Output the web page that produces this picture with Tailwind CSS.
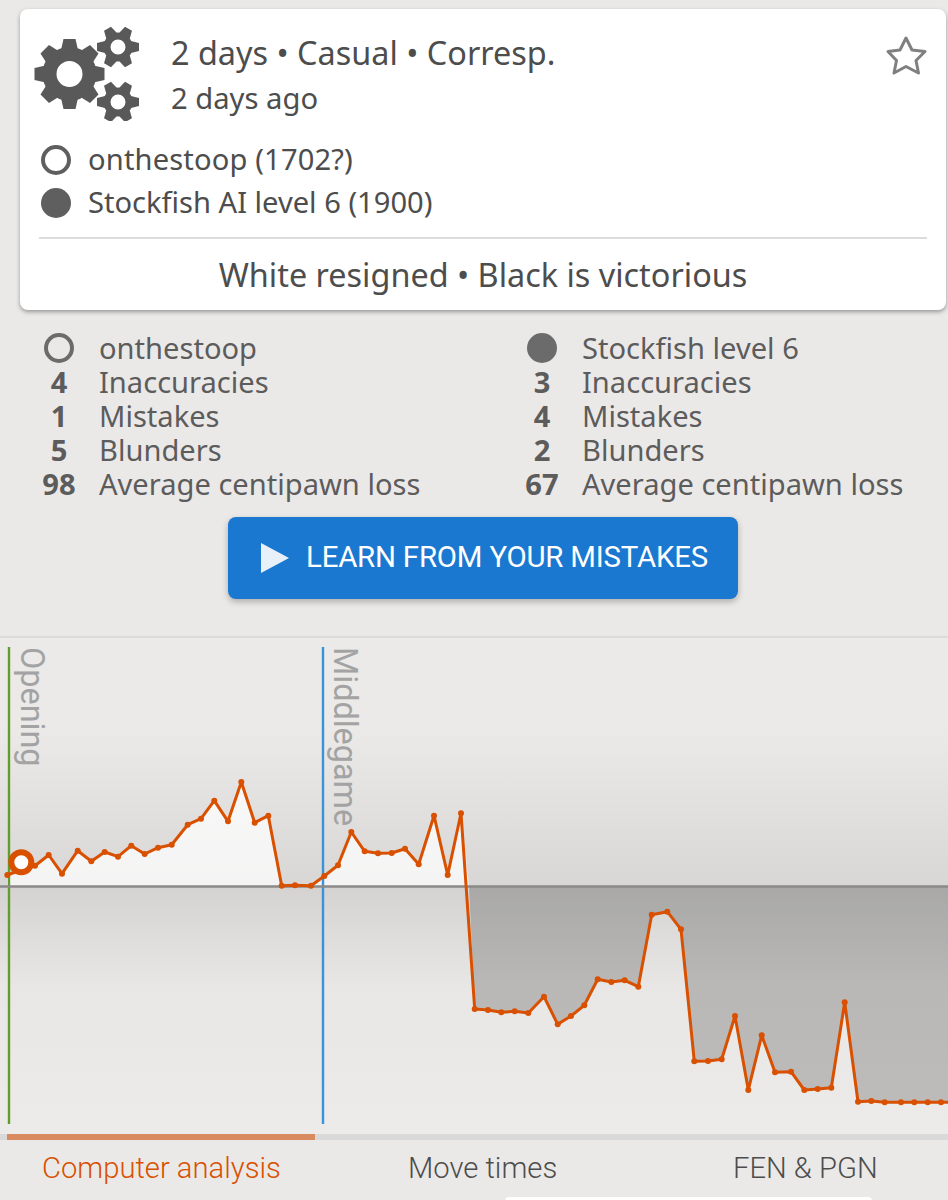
<!doctype html>
<html lang="en">
<head>
<meta charset="utf-8">
<title>Game analysis</title>
<script src="https://cdn.jsdelivr.net/npm/@tailwindcss/browser@4"></script>
</head>
<body class="m-0">
<div class="w-[948px] h-[1200px] overflow-hidden bg-[#ebe9e8] font-['Noto_Sans',sans-serif] text-[#4d4d4d]">

  <section class="relative ml-[20px] w-[926px] h-[301px] translate-y-[9px] rounded-[8px] bg-white shadow-[0_2px_4px_rgba(0,0,0,0.35)]">
    <div class="flex h-[112px] pt-[20px]">
      <svg class="ml-[13px] mt-[-4px] w-[110px] h-[96px] shrink-0" viewBox="33 25 110 96" fill="#595959" aria-hidden="true">
        <g>
          <circle cx="69.5" cy="74" r="20" fill="none" stroke="#595959" stroke-width="14"/>
          <g transform="translate(69.5 74)">
            <polygon points="-6,-35 6,-35 8.5,-24 -8.5,-24"/>
            <polygon points="-6,-35 6,-35 8.5,-24 -8.5,-24" transform="rotate(45)"/>
            <polygon points="-6,-35 6,-35 8.5,-24 -8.5,-24" transform="rotate(90)"/>
            <polygon points="-6,-35 6,-35 8.5,-24 -8.5,-24" transform="rotate(135)"/>
            <polygon points="-6,-35 6,-35 8.5,-24 -8.5,-24" transform="rotate(180)"/>
            <polygon points="-6,-35 6,-35 8.5,-24 -8.5,-24" transform="rotate(225)"/>
            <polygon points="-6,-35 6,-35 8.5,-24 -8.5,-24" transform="rotate(270)"/>
            <polygon points="-6,-35 6,-35 8.5,-24 -8.5,-24" transform="rotate(315)"/>
          </g>
        </g>
        <g transform="translate(118 47)">
          <circle r="11" fill="none" stroke="#595959" stroke-width="7"/>
          <polygon points="-4,-21 4,-21 6,-13 -6,-13" transform="rotate(30)"/>
          <polygon points="-4,-21 4,-21 6,-13 -6,-13" transform="rotate(90)"/>
          <polygon points="-4,-21 4,-21 6,-13 -6,-13" transform="rotate(150)"/>
          <polygon points="-4,-21 4,-21 6,-13 -6,-13" transform="rotate(210)"/>
          <polygon points="-4,-21 4,-21 6,-13 -6,-13" transform="rotate(270)"/>
          <polygon points="-4,-21 4,-21 6,-13 -6,-13" transform="rotate(330)"/>
        </g>
        <g transform="translate(118 102)">
          <circle r="11" fill="none" stroke="#595959" stroke-width="7"/>
          <polygon points="-4,-21 4,-21 6,-13 -6,-13" transform="rotate(30)"/>
          <polygon points="-4,-21 4,-21 6,-13 -6,-13" transform="rotate(90)"/>
          <polygon points="-4,-21 4,-21 6,-13 -6,-13" transform="rotate(150)"/>
          <polygon points="-4,-21 4,-21 6,-13 -6,-13" transform="rotate(210)"/>
          <polygon points="-4,-21 4,-21 6,-13 -6,-13" transform="rotate(270)"/>
          <polygon points="-4,-21 4,-21 6,-13 -6,-13" transform="rotate(330)"/>
        </g>
      </svg>
      <div class="ml-[28px]">
        <div class="text-[32.4px] leading-[46px]">2 days • Casual • Corresp.</div>
        <div class="text-[29.2px] leading-[44px] mt-[1px]">2 days ago</div>
      </div>
    </div>
    <svg class="absolute left-[865px] top-[26px] w-[42px] h-[42px]" viewBox="884 35 42 42" aria-hidden="true">
      <polygon points="905,38 911,50 924,51.5 915,60.5 917.5,73 905,66.5 893,73 895.5,60.5 887,51.5 899,50" fill="none" stroke="#808080" stroke-width="3" stroke-linejoin="round"/>
    </svg>

    <div class="pl-[21px] pt-[17px]">
      <div class="flex items-center h-[43px]">
        <span class="w-[30px] h-[30px] rounded-full border-[4px] border-[#5f5f5f] bg-white shrink-0"></span>
        <span class="ml-[17px] text-[29.1px] tracking-[0.15px]">onthestoop (1702?)</span>
      </div>
      <div class="flex items-center h-[43px]">
        <span class="w-[30px] h-[30px] rounded-full bg-[#5f5f5f] shrink-0"></span>
        <span class="ml-[17px] text-[29.1px]">Stockfish AI level 6 (1900)</span>
      </div>
    </div>
    <div class="mx-[19px] mt-[13px] h-[2px] bg-[#dcdcdc]"></div>
    <div class="text-center text-[32.4px] leading-[70px]">White resigned • Black is victorious</div>
  </section>

  <section class="grid grid-cols-2 pt-[30px] text-[#5c5c5c] text-[29.1px] leading-[34px]">
    <div class="pl-[39px]">
      <div class="flex items-center h-[34px]"><span class="w-[40px] flex justify-center"><span class="w-[30px] h-[30px] rounded-full border-[4px] border-[#6b6b6b]"></span></span><span class="ml-[20px]">onthestoop</span></div>
      <div class="flex items-center h-[34px]"><span class="w-[40px] text-center font-bold">4</span><span class="ml-[20px]">Inaccuracies</span></div>
      <div class="flex items-center h-[34px]"><span class="w-[40px] text-center font-bold">1</span><span class="ml-[20px]">Mistakes</span></div>
      <div class="flex items-center h-[34px]"><span class="w-[40px] text-center font-bold">5</span><span class="ml-[20px]">Blunders</span></div>
      <div class="flex items-center h-[34px]"><span class="w-[40px] text-center font-bold">98</span><span class="ml-[20px]">Average centipawn loss</span></div>
    </div>
    <div class="pl-[48px]">
      <div class="flex items-center h-[34px]"><span class="w-[40px] flex justify-center"><span class="w-[30px] h-[30px] rounded-full bg-[#6b6b6b]"></span></span><span class="ml-[20px]">Stockfish level 6</span></div>
      <div class="flex items-center h-[34px]"><span class="w-[40px] text-center font-bold">3</span><span class="ml-[20px]">Inaccuracies</span></div>
      <div class="flex items-center h-[34px]"><span class="w-[40px] text-center font-bold">4</span><span class="ml-[20px]">Mistakes</span></div>
      <div class="flex items-center h-[34px]"><span class="w-[40px] text-center font-bold">2</span><span class="ml-[20px]">Blunders</span></div>
      <div class="flex items-center h-[34px]"><span class="w-[40px] text-center font-bold">67</span><span class="ml-[20px]">Average centipawn loss</span></div>
    </div>
  </section>

  <div class="mt-[16px] ml-[228px] w-[510px] h-[82px] rounded-[8px] bg-[#1b78d0] shadow-[0_3px_6px_rgba(0,0,0,0.25)] flex items-center pl-[32px] text-white font-['Roboto',sans-serif] text-[29.4px]">
    <svg class="w-[30px] h-[32px] shrink-0" viewBox="0 0 30 32" aria-hidden="true"><polygon points="1,1 29,16 1,31" fill="#e8f1fa"/></svg>
    <span class="ml-[16px] mt-[-2px] tracking-[-0.2px]">LEARN FROM YOUR MISTAKES</span>
  </div>

  <div class="mt-[37px] h-[2px] bg-[#dcdbd9]"></div>

  <svg class="block w-[948px] h-[496px] bg-[linear-gradient(to_bottom,#ebeae9_0px,#ebeae9_90px,#d8d7d6_247px,#d4d3d2_249px,#e8e7e5_350px,#ecebe9_496px)]" viewBox="0 638 948 496" role="img" aria-label="Evaluation chart">
    <defs>
      <clipPath id="above"><rect x="0" y="638" width="948" height="248"/></clipPath>
      <clipPath id="below"><rect x="0" y="886" width="948" height="248"/></clipPath>
    </defs>
    <polygon clip-path="url(#above)" fill="#ffffff" fill-opacity="0.72" points="7,886 7.3,875 21,870 35,865.7 48.7,855 62,873.7 77.7,850.7 91.3,861.3 104.7,852 118,856.7 131.3,845.7 144.7,854 158,847.7 171.7,844.7 187.7,824.7 201,818.7 214.3,800.7 228,821.3 241.3,782 254.7,822.7 268.3,815.7 281.7,885.7 295,885.3 311,885.7 324.3,876 338,865.3 351.3,832 364.7,851.3 378,853.3 391.7,853 405,848.7 418.7,864.3 434,815.7 447.7,875 461,813.3 469,886"/>
    <polygon clip-path="url(#below)" fill="#000000" fill-opacity="0.2" points="469,886 474.7,1009 488,1010 501.3,1012.3 514.7,1011.3 528.3,1013 544,996.7 557.7,1024.3 571,1016 584.3,1005.3 597.7,979.3 611.3,982 624.7,980.3 638.3,986.7 651.7,914.7 667.3,911.7 681,929.3 694.3,1061.3 708,1061 721.7,1059.3 735,1016 748.3,1090 761.7,1035.3 775,1072.3 791,1071.7 804.3,1090 817.7,1089 831.3,1087.7 844.7,1002.3 858,1101.7 871.3,1101 884.7,1102.3 901,1102.3 914.3,1102.3 927.7,1102.3 941,1102.3 948,1102.3 948,886"/>

    <line x1="9" y1="647" x2="9" y2="1124" stroke="#5f9e2d" stroke-width="2.4"/>
    <line x1="323" y1="647" x2="323" y2="1124" stroke="#3893d8" stroke-width="2.4"/>
    <line x1="0" y1="886.5" x2="948" y2="886.5" stroke="#8b8a89" stroke-width="2.4"/>

    <text transform="translate(21 647) rotate(90)" fill="#a3a3a3" font-family="Roboto, sans-serif" font-size="32.4">Opening</text>
    <text transform="translate(334 647) rotate(90)" fill="#a3a3a3" font-family="Roboto, sans-serif" font-size="32.4">Middlegame</text>

    <polyline fill="none" stroke="#d85000" stroke-width="3" stroke-linejoin="round" points="7.3,875 21,870 35,865.7 48.7,855 62,873.7 77.7,850.7 91.3,861.3 104.7,852 118,856.7 131.3,845.7 144.7,854 158,847.7 171.7,844.7 187.7,824.7 201,818.7 214.3,800.7 228,821.3 241.3,782 254.7,822.7 268.3,815.7 281.7,885.7 295,885.3 311,885.7 324.3,876 338,865.3 351.3,832 364.7,851.3 378,853.3 391.7,853 405,848.7 418.7,864.3 434,815.7 447.7,875 461,813.3 474.7,1009 488,1010 501.3,1012.3 514.7,1011.3 528.3,1013 544,996.7 557.7,1024.3 571,1016 584.3,1005.3 597.7,979.3 611.3,982 624.7,980.3 638.3,986.7 651.7,914.7 667.3,911.7 681,929.3 694.3,1061.3 708,1061 721.7,1059.3 735,1016 748.3,1090 761.7,1035.3 775,1072.3 791,1071.7 804.3,1090 817.7,1089 831.3,1087.7 844.7,1002.3 858,1101.7 871.3,1101 884.7,1102.3 901,1102.3 914.3,1102.3 927.7,1102.3 941,1102.3 948,1102.3"/>
    <g fill="#d85000">
      <circle cx="7.3" cy="875" r="3"/><circle cx="35" cy="865.7" r="3"/><circle cx="48.7" cy="855" r="3"/><circle cx="62" cy="873.7" r="3"/><circle cx="77.7" cy="850.7" r="3"/><circle cx="91.3" cy="861.3" r="3"/><circle cx="104.7" cy="852" r="3"/><circle cx="118" cy="856.7" r="3"/><circle cx="131.3" cy="845.7" r="3"/><circle cx="144.7" cy="854" r="3"/><circle cx="158" cy="847.7" r="3"/><circle cx="171.7" cy="844.7" r="3"/><circle cx="187.7" cy="824.7" r="3"/><circle cx="201" cy="818.7" r="3"/><circle cx="214.3" cy="800.7" r="3"/><circle cx="228" cy="821.3" r="3"/><circle cx="241.3" cy="782" r="3"/><circle cx="254.7" cy="822.7" r="3"/><circle cx="268.3" cy="815.7" r="3"/><circle cx="281.7" cy="885.7" r="3"/><circle cx="295" cy="885.3" r="3"/><circle cx="311" cy="885.7" r="3"/><circle cx="324.3" cy="876" r="3"/><circle cx="338" cy="865.3" r="3"/><circle cx="351.3" cy="832" r="3"/><circle cx="364.7" cy="851.3" r="3"/><circle cx="378" cy="853.3" r="3"/><circle cx="391.7" cy="853" r="3"/><circle cx="405" cy="848.7" r="3"/><circle cx="418.7" cy="864.3" r="3"/><circle cx="434" cy="815.7" r="3"/><circle cx="447.7" cy="875" r="3"/><circle cx="461" cy="813.3" r="3"/><circle cx="474.7" cy="1009" r="3"/><circle cx="488" cy="1010" r="3"/><circle cx="501.3" cy="1012.3" r="3"/><circle cx="514.7" cy="1011.3" r="3"/><circle cx="528.3" cy="1013" r="3"/><circle cx="544" cy="996.7" r="3"/><circle cx="557.7" cy="1024.3" r="3"/><circle cx="571" cy="1016" r="3"/><circle cx="584.3" cy="1005.3" r="3"/><circle cx="597.7" cy="979.3" r="3"/><circle cx="611.3" cy="982" r="3"/><circle cx="624.7" cy="980.3" r="3"/><circle cx="638.3" cy="986.7" r="3"/><circle cx="651.7" cy="914.7" r="3"/><circle cx="667.3" cy="911.7" r="3"/><circle cx="681" cy="929.3" r="3"/><circle cx="694.3" cy="1061.3" r="3"/><circle cx="708" cy="1061" r="3"/><circle cx="721.7" cy="1059.3" r="3"/><circle cx="735" cy="1016" r="3"/><circle cx="748.3" cy="1090" r="3"/><circle cx="761.7" cy="1035.3" r="3"/><circle cx="775" cy="1072.3" r="3"/><circle cx="791" cy="1071.7" r="3"/><circle cx="804.3" cy="1090" r="3"/><circle cx="817.7" cy="1089" r="3"/><circle cx="831.3" cy="1087.7" r="3"/><circle cx="844.7" cy="1002.3" r="3"/><circle cx="858" cy="1101.7" r="3"/><circle cx="871.3" cy="1101" r="3"/><circle cx="884.7" cy="1102.3" r="3"/><circle cx="901" cy="1102.3" r="3"/><circle cx="914.3" cy="1102.3" r="3"/><circle cx="927.7" cy="1102.3" r="3"/><circle cx="941" cy="1102.3" r="3"/>
    </g>
    <circle cx="21.3" cy="862.3" r="10" fill="#ffffff" stroke="#d85000" stroke-width="6"/>
  </svg>

  <div class="h-[6px] bg-[#d9d9d9]"><div class="ml-[7px] w-[308px] h-[6px] bg-[#d98a5f]"></div></div>

  <nav class="relative h-[60px] flex items-center pb-[2px] font-['Roboto',sans-serif] font-light text-[29.2px]">
    <span class="absolute left-[42px] text-[#d85000]">Computer analysis</span>
    <span class="absolute left-[408px] text-[#4d4d4d]">Move times</span>
    <span class="absolute left-[733px] text-[#4d4d4d]">FEN &amp; PGN</span>
    <span class="absolute left-[505px] top-[57px] w-[367px] h-[6px] rounded-t-[4px] bg-white"></span>
  </nav>
</div>
</body>
</html>
